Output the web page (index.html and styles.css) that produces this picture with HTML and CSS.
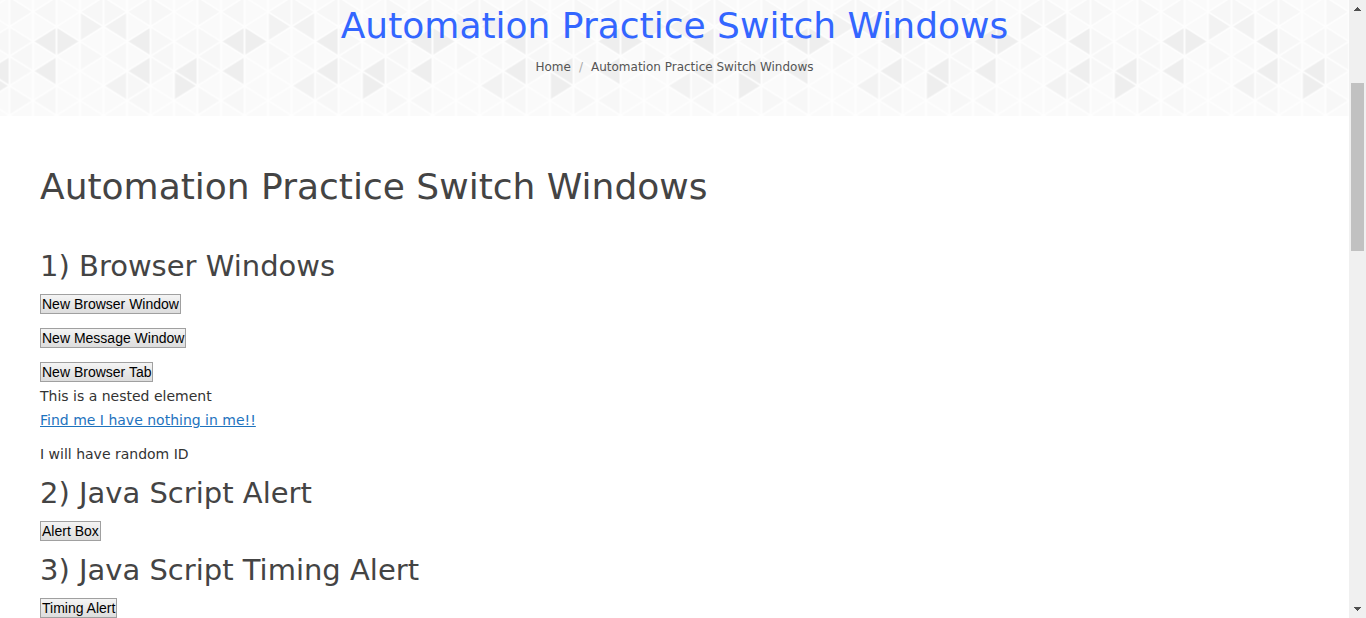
FILE: index.html
```html
<!DOCTYPE html>
<html lang="en">
<head>
<meta charset="utf-8">
<meta name="viewport" content="width=device-width, initial-scale=1">
<title>Automation Practice Switch Windows</title>
<link rel="stylesheet" href="styles.css">
</head>
<body class="page">
<div class="viewport">
  <header class="title-bar">
    <svg class="title-pattern" aria-hidden="true">
      <defs>
        <pattern id="triangles" x="9.5" y="-3" width="188" height="118.4" patternUnits="userSpaceOnUse">
          <rect width="188" height="118.4" fill="#fafafa"/>
          <g fill="#f7f7f7">
            <path d="M0 0L23.5 14.8L0 29.6ZM0 29.6L23.5 44.4L0 59.2ZM0 59.2L23.5 74L0 88.8ZM0 88.8L23.5 103.6L0 118.4Z"/>
            <path d="M23.5 14.8L47 0V29.6ZM23.5 103.6L47 88.8V118.4ZM0 59.2L23.5 44.4V74Z"/>
            <path d="M70.5 44.4L94 59.2L70.5 74ZM94 59.2L117.5 44.4V74Z"/>
            <path d="M141.5 0L165 14.8L141.5 29.6ZM141.5 29.6L165 44.4L141.5 59.2ZM141.5 59.2L165 74L141.5 88.8Z"/>
            <path d="M118 14.8L141.5 0V29.6ZM118 103.6L141.5 88.8V118.4ZM141.5 59.2L165 44.4V74ZM165 44.4L188 29.6V59.2Z"/>
            <path d="M94 0L117.5 14.8L94 29.6ZM118 74L141.5 88.8L118 103.6ZM70.5 14.8L94 0V29.6Z"/>
          </g>
          <g fill="#f2f2f2">
            <path d="M70.5 14.8L94 29.6L70.5 44.4ZM94 29.6L117.5 14.8V44.4ZM94 88.8L117.5 74V103.6Z"/>
          </g>
          <g fill="#eeeeee">
            <path d="M23.5 44.4L47 29.6V59.2ZM47 29.6L70.5 44.4L47 59.2ZM23.5 74L47 59.2V88.8Z"/>
            <path d="M117.5 44.4L141 29.6V59.2ZM117.5 74L141 59.2V88.8ZM164.5 74L188 59.2V88.8ZM164.5 74L188 88.8L164.5 103.6Z"/>
          </g>
          <g stroke="#fefefe" stroke-width="1.8" fill="none">
            <path d="M0 0V119M23.5 0V119M47 0V119M70.5 0V119M94 0V119M117.5 0V119M141 0V119M164.5 0V119M188 0V119"/>
            <path d="M0 0L188 118.4M0 29.6L141 118.4M0 59.2L94 118.4M0 88.8L47 118.4M47 0L188 88.8M94 0L188 59.2M141 0L188 29.6"/>
            <path d="M188 0L0 118.4M188 29.6L47 118.4M188 59.2L94 118.4M188 88.8L141 118.4M141 0L0 88.8M94 0L0 59.2M47 0L0 29.6"/>
          </g>
        </pattern>
      </defs>
      <rect width="100%" height="100%" fill="url(#triangles)"/>
    </svg>
    <h1 class="title">Automation Practice Switch Windows</h1>
    <nav class="breadcrumb" aria-label="Breadcrumb">
      <a class="crumb" href="#">Home</a>
      <span class="separator">/</span>
      <span class="crumb">Automation Practice Switch Windows</span>
    </nav>
  </header>
  <main class="content">
    <h1 class="heading">Automation Practice Switch Windows</h1>
    <h2 class="subheading">1) Browser Windows</h2>
    <div class="actions">
      <button class="action" type="button">New Browser Window</button>
      <button class="action" type="button">New Message Window</button>
      <button class="action" type="button">New Browser Tab</button>
    </div>
    <p class="text">This is a nested element</p>
    <p class="text"><a class="link" href="#">Find me I have nothing in me!!</a></p>
    <p class="text spaced">I will have random ID</p>
    <h2 class="subheading">2) Java Script Alert</h2>
    <div class="actions"><button class="action" type="button">Alert Box</button></div>
    <h2 class="subheading follows">3) Java Script Timing Alert</h2>
    <div class="actions"><button class="action" type="button">Timing Alert</button></div>
  </main>
</div>
<div class="scrollbar" aria-hidden="true">
  <svg class="arrow" viewBox="0 0 17 17" shape-rendering="crispEdges"><path d="M8 7h1v1h1v1h1v1h1v1H5v-1h1V9h1V8h1z" fill="#505050"/></svg>
  <div class="track"><div class="thumb"></div></div>
  <svg class="arrow" viewBox="0 0 17 17" shape-rendering="crispEdges"><path d="M5 6h7v1h-1v1h-1v1H9v1H8V9H7V8H6V7H5z" fill="#505050"/></svg>
</div>
</body>
</html>
```
FILE: styles.css
```css
* {
  box-sizing: border-box;
}

.page {
  display: flex;
  height: 100vh;
  margin: 0;
  overflow: hidden;
  background: #fff;
  color: #333;
  font: 14px/24px Verdana, "DejaVu Sans", sans-serif;
}

.viewport {
  flex: 1;
  min-width: 0;
  overflow: hidden;
}

.title-bar {
  position: relative;
  padding: 0 40px 39px;
  text-align: center;
}

.title-pattern {
  position: absolute;
  inset: 0;
  z-index: -1;
  width: 100%;
  height: 100%;
}

.title {
  margin: 0;
  color: #36f;
  font-size: 36px;
  font-weight: 400;
  line-height: 52px;
}

.breadcrumb {
  display: flex;
  justify-content: center;
  gap: 8px;
  padding-top: 5px;
  font-size: 12px;
  line-height: 20px;
}

.crumb {
  color: #555;
  text-decoration: none;
}

.separator {
  color: #aaa;
}

.content {
  padding: 49px 40px 0;
}

.heading {
  margin: 0 0 37px;
  color: #444;
  font-size: 36px;
  font-weight: 400;
  line-height: 44px;
}

.subheading {
  margin: 0 0 8px;
  color: #444;
  font-size: 29px;
  font-weight: 400;
  line-height: 40px;
}

.follows {
  margin-top: 7px;
}

.actions {
  display: flex;
  flex-direction: column;
  align-items: flex-start;
  gap: 14px;
  padding-bottom: 2px;
}

.action {
  height: 20px;
  padding: 0 1px;
  border: 1px solid #a0a0a0;
  border-radius: 0;
  background: linear-gradient(#f4f4f4, #dddddd);
  color: #000;
  font: 14px/18px "Liberation Sans", Arial, sans-serif;
}

.text {
  margin: 0;
}

.spaced {
  margin: 10px 0 7px;
}

.link {
  color: #1e73be;
  text-decoration: underline;
}

.scrollbar {
  display: flex;
  flex-direction: column;
  flex: 0 0 17px;
  background: #f0f0f0;
}

.arrow {
  display: block;
  width: 17px;
  height: 17px;
}

.track {
  flex: 1;
  padding: 0 2px;
}

.thumb {
  position: relative;
  top: 11.3%;
  height: 28.8%;
  background: #c1c1c1;
}
```
